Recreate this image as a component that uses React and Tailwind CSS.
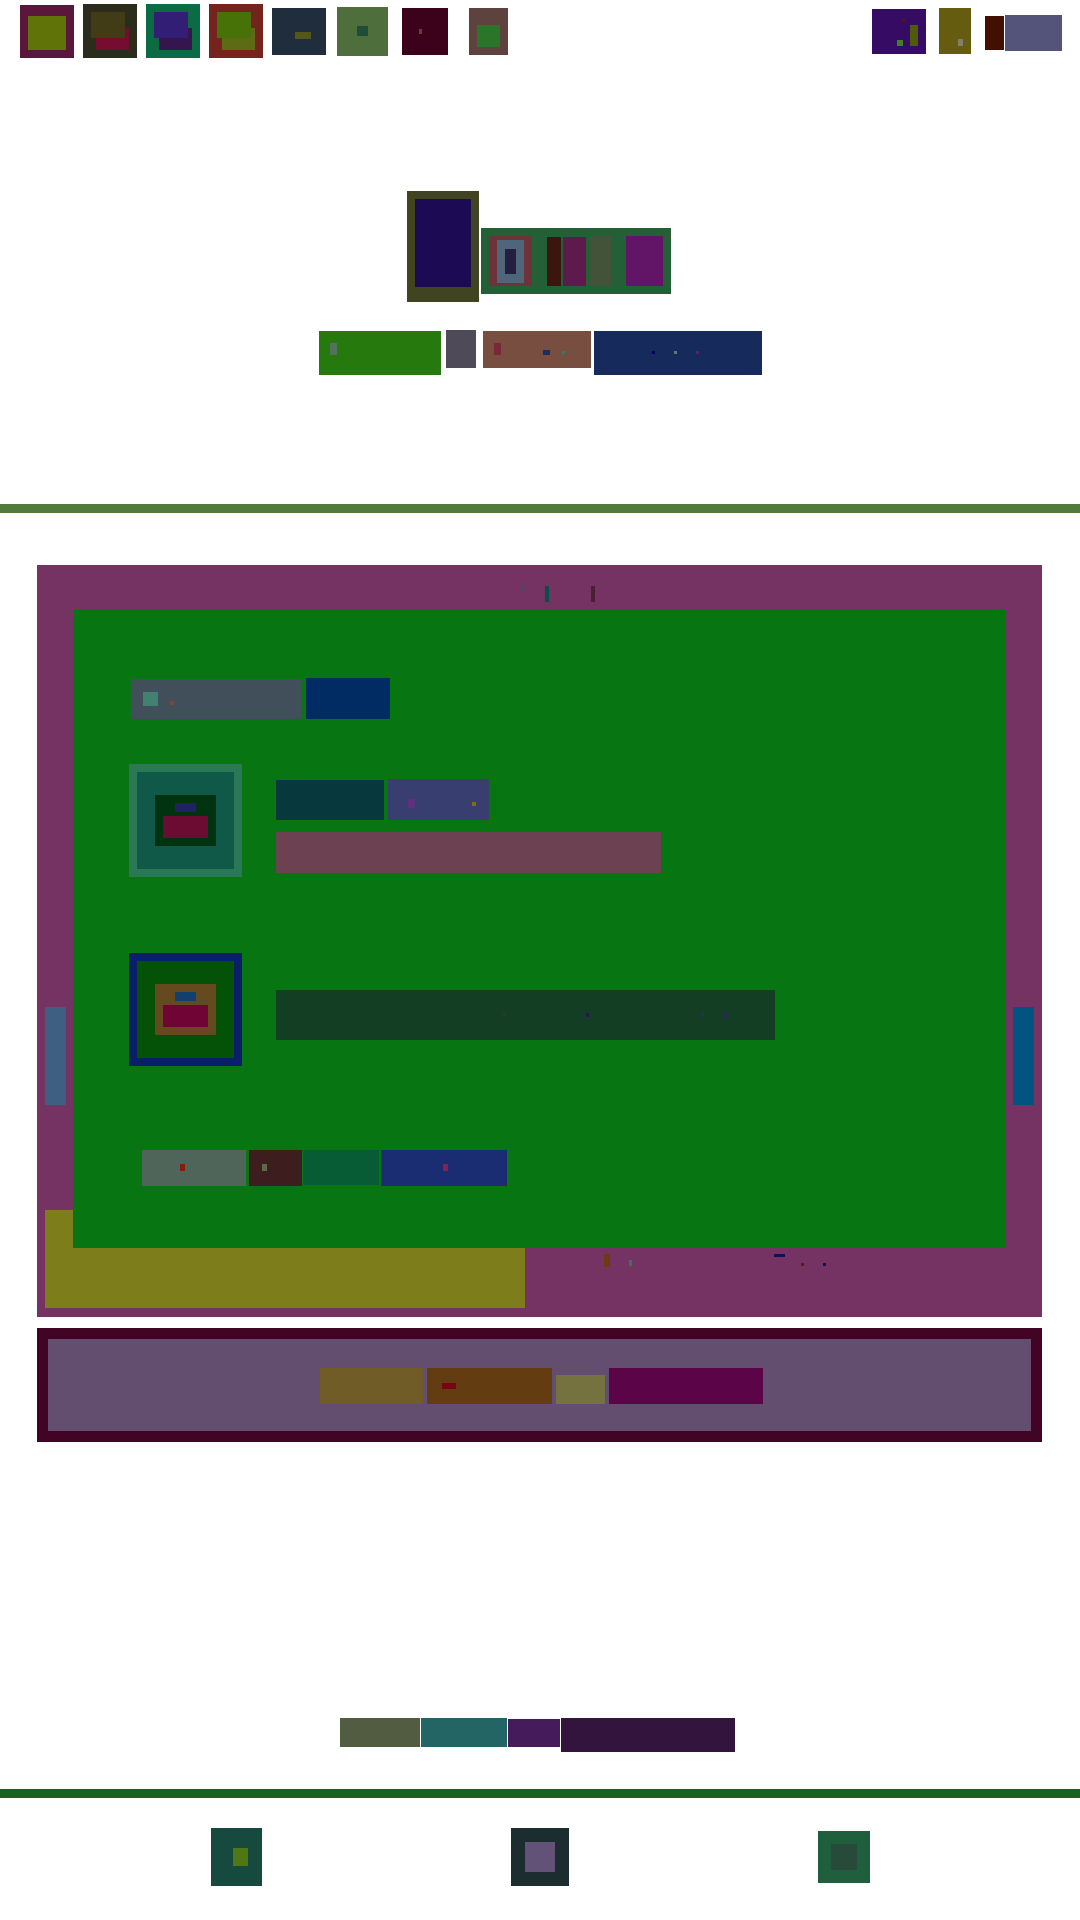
const Header = () => (
  <header className="flex h-[191px] items-start justify-between pl-[20px] pr-[18px]">
    <div className="flex items-start">
      <div className="mt-[5px] h-[53px] w-[54px] bg-[#5a173b] pl-[8px] pt-[11px]">
        <div className="h-[34px] w-[38px] bg-[#607308]" />
      </div>
      <div className="ml-[9px] mt-[4px] flex h-[54px] w-[54px] flex-col bg-[#2b2c1b] pl-[8px] pt-[8px]">
        <div className="relative z-10 h-[26px] w-[34px] bg-[#423c16]" />
        <div className="-mt-[10px] ml-[5px] h-[22px] w-[33px] bg-[#740d2f]" />
      </div>
      <div className="ml-[9px] mt-[4px] flex h-[54px] w-[54px] flex-col bg-[#0b6b42] pl-[8px] pt-[8px]">
        <div className="relative z-10 h-[26px] w-[34px] bg-[#321f75]" />
        <div className="-mt-[10px] ml-[5px] h-[22px] w-[33px] bg-[#34154e]" />
      </div>
      <div className="ml-[9px] mt-[4px] flex h-[54px] w-[54px] flex-col bg-[#74241d] pl-[8px] pt-[8px]">
        <div className="relative z-10 h-[26px] w-[34px] bg-[#477208]" />
        <div className="-mt-[10px] ml-[5px] h-[22px] w-[33px] bg-[#5e6b15]" />
      </div>
      <div className="ml-[9px] mt-[8px] h-[47px] w-[54px] bg-[#1f2d3d] pl-[23px] pt-[24px]">
        <div className="h-[7px] w-[16px] bg-[#54561a]" />
      </div>
      <div className="ml-[11px] mt-[7px] h-[49px] w-[51px] bg-[#4e6f3c] pl-[20px] pt-[19px]">
        <div className="h-[10px] w-[11px] bg-[#1f4d3a]" />
      </div>
      <div className="ml-[14px] mt-[8px] h-[47px] w-[46px] bg-[#3c021b] pl-[17px] pt-[21px]">
        <div className="h-[5px] w-[3px] bg-[#6b3c3c]" />
      </div>
      <div className="ml-[21px] mt-[8px] h-[47px] w-[39px] bg-[#5e423d] pl-[8px] pt-[17px]">
        <div className="h-[22px] w-[23px] bg-[#2b752b]" />
      </div>
    </div>
    <div className="flex items-start">
      <div className="mt-[9px] flex h-[45px] w-[54px] items-start bg-[#360b63] pl-[25px]">
        <div className="mt-[31px] h-[6px] w-[6px] bg-[#3f7f2b]" />
        <div className="-ml-[1px] mt-[10px] h-[3px] w-[3px] bg-[#5c0f20]" />
        <div className="ml-[5px] mt-[16px] h-[21px] w-[8px] bg-[#4f5a0a]" />
      </div>
      <div className="ml-[13px] mt-[8px] h-[46px] w-[32px] bg-[#665c10] pl-[19px] pt-[31px]">
        <div className="h-[7px] w-[5px] bg-[#7f7f6a]" />
      </div>
      <div className="ml-[14px] mt-[16px] h-[34px] w-[19px] bg-[#420f00]" />
      <div className="ml-[1px] mt-[15px] h-[36px] w-[57px] bg-[#54537a]" />
    </div>
  </header>
);

const Hero = () => (
  <section>
    <div className="flex items-start pl-[407px]">
      <div className="h-[111px] w-[72px] bg-[#404420] pl-[8px] pt-[8px]">
        <div className="h-[88px] w-[56px] bg-[#1c0a55]" />
      </div>
      <div className="ml-[2px] mt-[37px] flex h-[66px] w-[190px] items-start bg-[#236035] pl-[8px] pt-[8px]">
        <div className="h-[50px] w-[43px] bg-[#6c3439] pl-[8px] pt-[4px]">
          <div className="h-[43px] w-[27px] bg-[#4f657a] pl-[8px] pt-[9px]">
            <div className="h-[25px] w-[11px] bg-[#241f41]" />
          </div>
        </div>
        <div className="ml-[15px] mt-[1px] h-[49px] w-[14px] bg-[#3c150f]" />
        <div className="ml-[2px] mt-[1px] h-[49px] w-[23px] bg-[#5e1a4c]" />
        <div className="ml-[4px] h-[50px] w-[21px] bg-[#43533a]" />
        <div className="ml-[15px] h-[50px] w-[37px] bg-[#621567]" />
      </div>
    </div>
    <div className="mt-[28px] flex items-start pl-[319px]">
      <div className="mt-[1px] h-[44px] w-[122px] bg-[#25790d] pl-[11px] pt-[12px]">
        <div className="h-[12px] w-[7px] bg-[#55705f]" />
      </div>
      <div className="ml-[5px] h-[38px] w-[30px] bg-[#4e4a58]" />
      <div className="ml-[7px] mt-[1px] flex h-[37px] w-[108px] items-start bg-[#784e41] pl-[11px] pt-[12px]">
        <div className="h-[12px] w-[7px] bg-[#7a2838]" />
        <div className="ml-[42px] mt-[7px] h-[5px] w-[7px] bg-[#172f66]" />
        <div className="ml-[12px] mt-[8px] h-[3px] w-[3px] bg-[#3b7a6a]" />
      </div>
      <div className="ml-[3px] mt-[1px] flex h-[44px] w-[168px] items-start gap-[19px] bg-[#172a5c] pl-[58px] pt-[20px]">
        <div className="h-[3px] w-[3px] bg-[#000060]" />
        <div className="h-[3px] w-[3px] bg-[#5f7a6a]" />
        <div className="h-[3px] w-[3px] bg-[#4d2a60]" />
      </div>
    </div>
  </section>
);

const MainPanel = () => (
  <section className="relative ml-[37px] mt-[52px] w-[1005px] bg-[#743363] pb-[9px] pt-[21px]">
    <div className="absolute left-[8px] top-[442px] h-[98px] w-[21px] bg-[#3f5f82]" />
    <div className="absolute right-[8px] top-[442px] z-20 h-[98px] w-[21px] bg-[#00547f]" />

    <div className="flex h-[16px] items-start pl-[484px]">
      <div className="h-[4px] w-[3px] bg-[#2d5565]" />
      <div className="ml-[21px] h-[16px] w-[4px] bg-[#07504a]" />
      <div className="ml-[42px] h-[16px] w-[4px] bg-[#4a1f33]" />
    </div>

    <div className="relative z-10 ml-[36px] mt-[7px] h-[639px] w-[933px] bg-[#067512] pl-[56px] pt-[69px]">
      <div className="flex items-start gap-[4px] pl-[2px]">
        <div className="mt-[1px] flex h-[40px] w-[171px] items-start bg-[#414f5a] pl-[12px] pt-[13px]">
          <div className="h-[14px] w-[15px] bg-[#428071]" />
          <div className="ml-[12px] mt-[9px] h-[4px] w-[4px] bg-[#8a3f3f]" />
        </div>
        <div className="h-[41px] w-[84px] bg-[#002b63]" />
      </div>

      <div className="mt-[45px] flex items-start">
        <div className="h-[113px] w-[113px] border-[8px] border-[#2a7856] bg-[#105848] pl-[18px] pt-[23px]">
          <div className="flex h-[51px] w-[61px] flex-col items-center bg-[#013310] pt-[8px]">
            <div className="h-[9px] w-[21px] bg-[#1c2264]" />
            <div className="mt-[4px] h-[22px] w-[45px] bg-[#6d0c33]" />
          </div>
        </div>
        <div className="ml-[34px] mt-[15px]">
          <div className="flex items-start gap-[4px]">
            <div className="mt-[1px] h-[40px] w-[108px] bg-[#07383e]" />
            <div className="flex h-[41px] w-[101px] items-start bg-[#393e70] pl-[20px] pt-[20px]">
              <div className="h-[9px] w-[7px] bg-[#60307f]" />
              <div className="ml-[57px] mt-[3px] h-[4px] w-[4px] bg-[#7a7010]" />
            </div>
          </div>
          <div className="mt-[12px] h-[41px] w-[385px] bg-[#6c4252]" />
        </div>
      </div>

      <div className="mt-[76px] flex items-start">
        <div className="h-[113px] w-[113px] border-[8px] border-[#0a1f68] bg-[#035208] pl-[18px] pt-[23px]">
          <div className="flex h-[51px] w-[61px] flex-col items-center bg-[#664a1f] pt-[8px]">
            <div className="h-[9px] w-[21px] bg-[#123f6c]" />
            <div className="mt-[4px] h-[22px] w-[45px] bg-[#6f0435]" />
          </div>
        </div>
        <div className="ml-[34px] mt-[37px] flex h-[50px] w-[499px] items-start bg-[#133e24] pl-[227px] pt-[23px]">
          <div className="h-[4px] w-[3px] bg-[#2c3a24]" />
          <div className="ml-[80px] h-[4px] w-[3px] bg-[#2a1060]" />
          <div className="ml-[112px] h-[4px] w-[3px] bg-[#1f3070]" />
          <div className="ml-[19px] h-[4px] w-[4px] bg-[#3a1a6a]" />
        </div>
      </div>

      <div className="mt-[84px] flex items-start pl-[13px]">
        <div className="h-[36px] w-[104px] bg-[#4f6559] pl-[38px] pt-[14px]">
          <div className="h-[7px] w-[5px] bg-[#8b1a0c]" />
        </div>
        <div className="ml-[3px] h-[36px] w-[53px] bg-[#3e1d1f] pl-[13px] pt-[14px]">
          <div className="h-[7px] w-[5px] bg-[#5c6a4a]" />
        </div>
        <div className="ml-[1px] h-[35px] w-[76px] bg-[#075c36]" />
        <div className="ml-[2px] h-[36px] w-[126px] bg-[#1a2c72] pl-[62px] pt-[14px]">
          <div className="h-[7px] w-[5px] bg-[#80264a]" />
        </div>
      </div>
    </div>

    <div className="-mt-[38px] ml-[8px] flex items-start">
      <div className="h-[98px] w-[480px] bg-[#7e7d1c]" />
      <div className="ml-[79px] mt-[44px] h-[13px] w-[6px] bg-[#6f3a10]" />
      <div className="ml-[19px] mt-[50px] h-[6px] w-[3px] bg-[#2f7a5a]" />
      <div className="ml-[142px] mt-[44px] h-[3px] w-[11px] bg-[#0e1258]" />
      <div className="ml-[16px] mt-[53px] h-[3px] w-[3px] bg-[#4a2412]" />
      <div className="ml-[19px] mt-[53px] h-[3px] w-[3px] bg-[#0a1268]" />
    </div>
  </section>
);

const PromoPanel = () => (
  <section className="ml-[37px] mt-[11px] h-[114px] w-[1005px] border-[11px] border-[#420424] bg-[#634e70] pl-[272px] pt-[29px]">
    <div className="flex items-start gap-[4px]">
      <div className="h-[36px] w-[103px] bg-[#6f5c26]" />
      <div className="h-[36px] w-[125px] bg-[#633c12] pl-[15px] pt-[15px]">
        <div className="h-[6px] w-[14px] bg-[#780510]" />
      </div>
      <div className="mt-[7px] h-[29px] w-[49px] bg-[#76723f]" />
      <div className="h-[36px] w-[154px] bg-[#5b0447]" />
    </div>
  </section>
);

const Footer = () => (
  <footer>
    <div className="mt-[276px] flex items-start gap-px pl-[340px]">
      <div className="h-[29px] w-[80px] bg-[#525c40]" />
      <div className="h-[29px] w-[86px] bg-[#236564]" />
      <div className="mt-[1px] h-[28px] w-[52px] bg-[#451b5c]" />
      <div className="h-[34px] w-[174px] bg-[#32143c]" />
    </div>
    <div className="mt-[37px] h-[9px] bg-[#1c5f20]" />
    <div className="mt-[30px] flex items-start pl-[211px]">
      <div className="h-[58px] w-[51px] bg-[#174a3e] pl-[22px] pt-[20px]">
        <div className="h-[18px] w-[15px] bg-[#4f7713]" />
      </div>
      <div className="ml-[249px] h-[58px] w-[58px] bg-[#1c2d30] pl-[14px] pt-[14px]">
        <div className="h-[30px] w-[30px] bg-[#625277]" />
      </div>
      <div className="ml-[249px] mt-[3px] h-[52px] w-[52px] bg-[#205f3e] pl-[13px] pt-[13px]">
        <div className="h-[26px] w-[26px] bg-[#284a3a]" />
      </div>
    </div>
  </footer>
);

const App = () => (
  <div className="min-h-[1920px] w-full bg-white">
    <Header />
    <Hero />
    <div className="mt-[129px] h-[9px] bg-[#527a3a]" />
    <MainPanel />
    <PromoPanel />
    <Footer />
  </div>
);

export default App;
